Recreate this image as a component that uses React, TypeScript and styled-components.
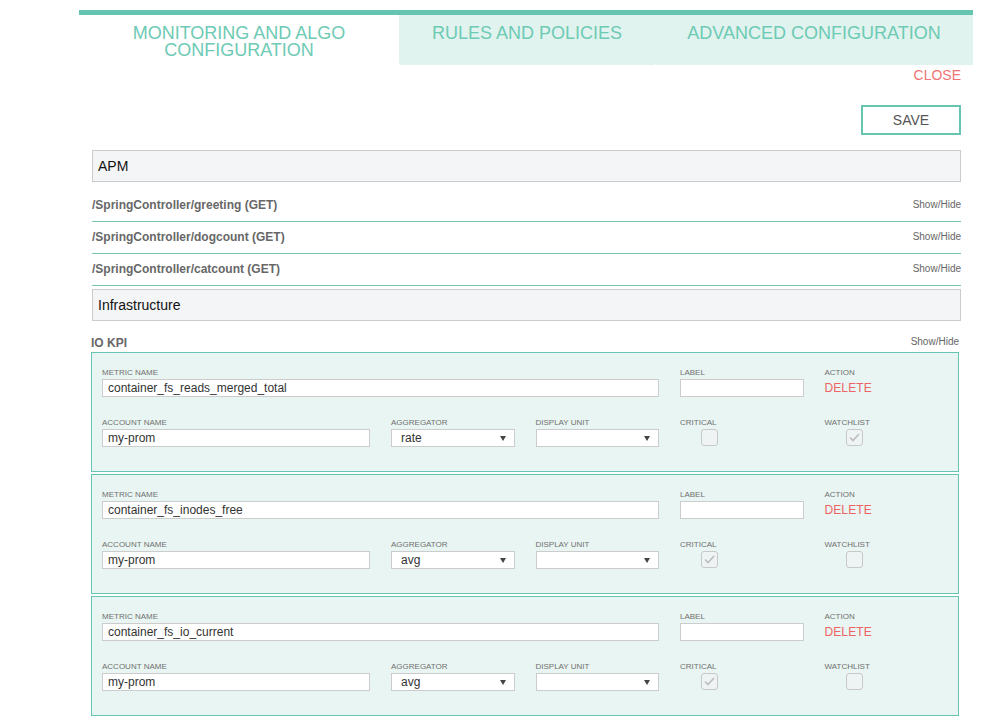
import React from "react";
import styled, { createGlobalStyle } from "styled-components";

const TEAL = "#66c5b1";

const GlobalStyle = createGlobalStyle`
  html, body { margin: 0; padding: 0; background: #ffffff; }
  body { font-family: "Liberation Sans", Arial, Helvetica, sans-serif; }
  * { box-sizing: border-box; }
`;

const Page = styled.div`
  margin: 10px 0 0 79px;
  width: 894px;
`;

const TabBar = styled.div`
  display: flex;
  border-top: 5px solid ${TEAL};
  height: 55px;
`;

const Tab = styled.div<{ $active?: boolean; $width?: number }>`
  ${(p) => (p.$width ? `width: ${p.$width}px;` : "flex: 1;")}
  background: ${(p) => (p.$active ? "#ffffff" : "#e0f3ee")};
  color: #6dcab4;
  font-size: 18px;
  line-height: 16.6px;
  text-align: center;
  padding: 10px 18px 0;
  border-bottom-left-radius: ${(p) => (p.$active ? "0" : "3px")};
`;

const Content = styled.div`
  padding: 0 12px 0 13px;
`;

const CloseRow = styled.div`
  margin-top: 2px;
  text-align: right;
  color: #f07474;
  font-size: 14px;
  line-height: 16px;
`;

const SaveRow = styled.div`
  display: flex;
  justify-content: flex-end;
  margin-top: 22px;
`;

const SaveButton = styled.button`
  width: 100px;
  height: 30px;
  border: 2px solid ${TEAL};
  background: #ffffff;
  color: #555;
  font-family: inherit;
  font-size: 14px;
  padding: 0;
`;

const SectionBox = styled.div<{ $gap: number }>`
  margin-top: ${(p) => p.$gap}px;
  height: 32px;
  border: 1px solid #cccccc;
  background: #f4f5f6;
  padding-left: 5px;
  display: flex;
  align-items: center;
  font-size: 14px;
  color: #111;
`;

const EndpointList = styled.div`
  margin-top: 8px;
`;

const EndpointRow = styled.div`
  height: 32px;
  border-bottom: 1px solid #78c6b1;
  display: flex;
  align-items: center;
  justify-content: space-between;
`;

const RowTitle = styled.span`
  font-size: 12px;
  font-weight: bold;
  color: #676767;
  margin-top: -1px;
`;

const ShowHide = styled.span`
  font-size: 10px;
  color: #666;
  margin-top: -3px;
`;

const KpiSection = styled.div`
  margin: 0 2px 0 -1px;
`;

const KpiHeader = styled.div`
  margin-top: 15px;
  margin-bottom: 2px;
  height: 14px;
  line-height: 14px;
  display: flex;
  justify-content: space-between;
  align-items: center;
`;

const Card = styled.div`
  border: 1px solid ${TEAL};
  background: #e8f5f2;
  padding: 15px 10px 24px;
  margin-bottom: 2px;
  display: grid;
  grid-template-columns: repeat(6, 1fr);
  column-gap: 21px;
  row-gap: 21px;
`;

const Field = styled.div<{ $span?: number }>`
  grid-column: span ${(p) => p.$span ?? 1};
  display: flex;
  flex-direction: column;
`;

const Label = styled.div`
  font-size: 8px;
  line-height: 10px;
  margin-bottom: 1px;
  color: #707070;
  text-transform: uppercase;
`;

const TextBox = styled.div`
  height: 18px;
  border: 1px solid #cccccc;
  background: #ffffff;
  padding: 0 5px;
  font-size: 12px;
  line-height: 16px;
  color: #333;
  white-space: nowrap;
  overflow: hidden;
`;

const SelectBox = styled.div`
  height: 18px;
  border: 1px solid #cccccc;
  background: #ffffff;
  padding: 0 8px 0 9px;
  font-size: 12px;
  line-height: 16px;
  color: #333;
  display: flex;
  align-items: center;
  justify-content: space-between;
`;

const Arrow = styled.svg`
  width: 6px;
  height: 5px;
  flex: none;
`;

const DeleteLink = styled.div`
  font-size: 12px;
  line-height: 18px;
  color: #ee6464;
  letter-spacing: 0.1px;
`;

const Check = styled.div`
  margin-left: 21px;
  width: 17px;
  height: 17px;
  border: 1px solid #c8c8c8;
  border-radius: 3px;
  background: #eef4f3;
  display: flex;
  align-items: center;
  justify-content: center;
`;

type Metric = {
  name: string;
  aggregator: string;
  critical: boolean;
  watchlist: boolean;
};

const metrics: Metric[] = [
  { name: "container_fs_reads_merged_total", aggregator: "rate", critical: false, watchlist: true },
  { name: "container_fs_inodes_free", aggregator: "avg", critical: true, watchlist: false },
  { name: "container_fs_io_current", aggregator: "avg", critical: true, watchlist: false },
];

const endpoints = [
  "/SpringController/greeting (GET)",
  "/SpringController/dogcount (GET)",
  "/SpringController/catcount (GET)",
];

function Select({ value }: { value: string }) {
  return (
    <SelectBox>
      <span>{value}</span>
      <Arrow viewBox="0 0 6 5">
        <path d="M0 0 L6 0 L3 5 Z" fill="#444" />
      </Arrow>
    </SelectBox>
  );
}

function CheckBox({ checked }: { checked: boolean }) {
  return (
    <Check>
      {checked && (
        <svg width="11" height="9" viewBox="0 0 11 9">
          <path d="M1 4.5 L4 7.5 L10 1" fill="none" stroke="#bdbdbd" strokeWidth="1.6" />
        </svg>
      )}
    </Check>
  );
}

function MetricCard({ m }: { m: Metric }) {
  return (
    <Card>
      <Field $span={4}>
        <Label>Metric Name</Label>
        <TextBox>{m.name}</TextBox>
      </Field>
      <Field>
        <Label>Label</Label>
        <TextBox />
      </Field>
      <Field>
        <Label>Action</Label>
        <DeleteLink>DELETE</DeleteLink>
      </Field>
      <Field $span={2}>
        <Label>Account Name</Label>
        <TextBox>my-prom</TextBox>
      </Field>
      <Field>
        <Label>Aggregator</Label>
        <Select value={m.aggregator} />
      </Field>
      <Field>
        <Label>Display Unit</Label>
        <Select value="" />
      </Field>
      <Field>
        <Label>Critical</Label>
        <CheckBox checked={m.critical} />
      </Field>
      <Field>
        <Label>Watchlist</Label>
        <CheckBox checked={m.watchlist} />
      </Field>
    </Card>
  );
}

export default function App() {
  return (
    <>
      <GlobalStyle />
      <Page>
        <TabBar>
          <Tab $active $width={320}>MONITORING AND ALGO CONFIGURATION</Tab>
          <Tab $width={256}>RULES AND POLICIES</Tab>
          <Tab>ADVANCED CONFIGURATION</Tab>
        </TabBar>
        <Content>
          <CloseRow>CLOSE</CloseRow>
          <SaveRow>
            <SaveButton>SAVE</SaveButton>
          </SaveRow>
          <SectionBox $gap={15}>APM</SectionBox>
          <EndpointList>
            {endpoints.map((e) => (
              <EndpointRow key={e}>
                <RowTitle>{e}</RowTitle>
                <ShowHide>Show/Hide</ShowHide>
              </EndpointRow>
            ))}
          </EndpointList>
          <SectionBox $gap={3}>Infrastructure</SectionBox>
          <KpiSection>
            <KpiHeader>
              <RowTitle>IO KPI</RowTitle>
              <ShowHide>Show/Hide</ShowHide>
            </KpiHeader>
            {metrics.map((m) => (
              <MetricCard key={m.name} m={m} />
            ))}
          </KpiSection>
        </Content>
      </Page>
    </>
  );
}
